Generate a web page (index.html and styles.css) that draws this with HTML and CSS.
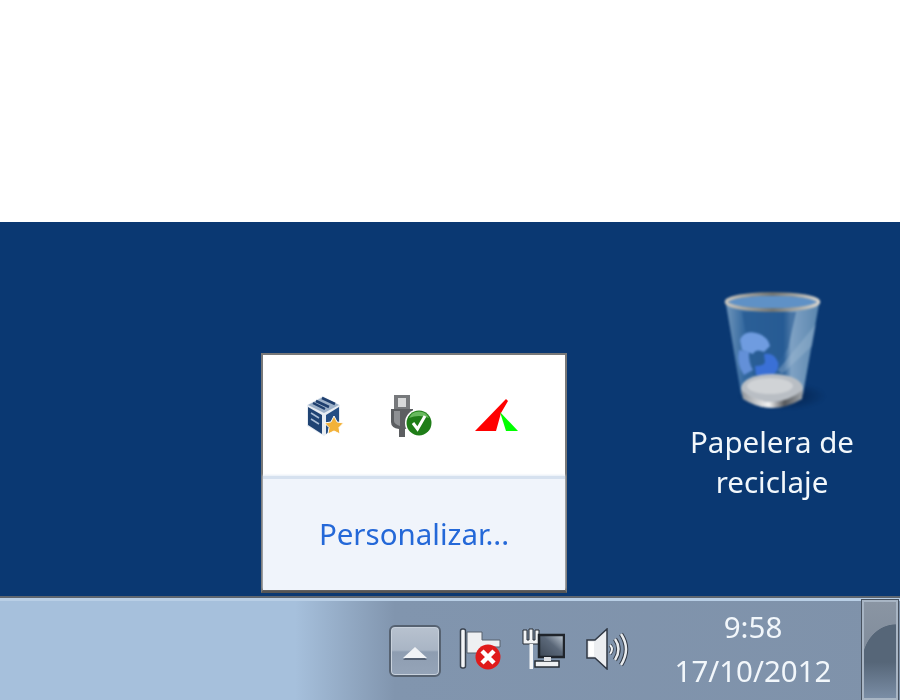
FILE: index.html
```html
<!DOCTYPE html>
<html lang="es">
<head>
  <meta charset="UTF-8">
  <title>Área de notificación</title>
  <link rel="stylesheet" href="styles.css">
</head>
<body>
  <div class="blank"></div>

  <div class="desktop">
    <div class="desk-icon">
      <svg class="bin" viewBox="0 0 110 125" width="110" height="125">
        <defs>
          <linearGradient id="binBody" x1="0" y1="0" x2="1" y2="0">
            <stop offset="0" stop-color="#6f95ba"/>
            <stop offset=".2" stop-color="#33689f"/>
            <stop offset=".62" stop-color="#2a5f98"/>
            <stop offset=".7" stop-color="#7fa2c4"/>
            <stop offset="1" stop-color="#5a86ae"/>
          </linearGradient>
          <linearGradient id="binRim" x1="0" y1="0" x2="1" y2="0">
            <stop offset="0" stop-color="#c9c6bf"/>
            <stop offset=".5" stop-color="#77766f"/>
            <stop offset="1" stop-color="#d8d6d0"/>
          </linearGradient>
          <linearGradient id="binBase" x1="0" y1="0" x2="1" y2="0">
            <stop offset="0" stop-color="#8f949a"/>
            <stop offset=".45" stop-color="#f4f4f4"/>
            <stop offset=".7" stop-color="#55585c"/>
            <stop offset="1" stop-color="#a2a6aa"/>
          </linearGradient>
          <radialGradient id="binShadow">
            <stop offset="0" stop-color="#02173a" stop-opacity=".75"/>
            <stop offset="1" stop-color="#02173a" stop-opacity="0"/>
          </radialGradient>
        </defs>
        <ellipse cx="62" cy="108" rx="44" ry="14" fill="url(#binShadow)"/>
        <path d="M6 16 L21 106 Q52 124 83 106 L99 16 Z" fill="url(#binBody)"/>
        <path d="M22 24 L76 24 L68 60 L44 95 L34 92 Z" fill="#245891" opacity=".6"/>
        <path d="M58 82 L96 36 L92 58 L62 86 Z" fill="#a6c0d8" opacity=".35"/>
        <!-- recycle arrows -->
        <path d="M20 52 Q24 42 36 45 Q48 48 50 58 L44 64 Q36 60 33 66 L22 62 Z" fill="#6f9ce0"/>
        <path d="M19 62 L29 64 Q28 74 33 82 L24 87 Q16 76 19 62 Z" fill="#6390d8"/>
        <path d="M44 66 Q54 64 58 74 Q60 84 50 88 L36 87 L35 78 Q44 78 45 74 Z" fill="#3a70d6"/>
        <ellipse cx="52" cy="100" rx="31" ry="14" fill="#b9bec4"/>
        <ellipse cx="50" cy="98" rx="23" ry="8" fill="#d0d3d6"/>
        <path d="M21 102 L23 111 Q52 129 82 111 L83 102 Q52 126 21 102 Z" fill="url(#binBase)"/>
        <ellipse cx="52.500" cy="14" rx="44" ry="6.500" fill="#5f91c6"/>
        <ellipse cx="52.500" cy="14" rx="46" ry="8" fill="none" stroke="url(#binRim)" stroke-width="3.500"/>
      </svg>
      <span class="desk-label">Papelera de<br>reciclaje</span>
    </div>

    <div class="tray-popup">
      <div class="popup-icons">
        <svg class="soft" viewBox="0 0 40 44" width="40" height="44">
          <path d="M19 2 L36 11 L36 32 L20 42 L3 32 L3 11 Z" fill="#e8edf3"/>
          <path d="M19 3 L35 11 L20 19 L4 11 Z" fill="#9db1c9"/>
          <path d="M12 7 L25 13 M18 4 L31 10 M9 9 L21 15" stroke="#1f3f6e" stroke-width="2.500"/>
          <path d="M4 13 L18 21 L18 40 L4 31 Z" fill="#1f4373"/>
          <path d="M22 21 L35 13 L35 31 L22 40 Z" fill="#254e84"/>
          <path d="M7 19 L15 24 M7 25 L15 30" stroke="#a9bdd6" stroke-width="1.500"/>
          <path d="M30 22 L33.100 28 L39.500 29 L35 33.500 L36 40 L30 37 L24 40 L25 33.500 L20.500 29 L26.900 28 Z" fill="#f3b23a" stroke="#fff" stroke-width="1"/>
        </svg>
        <svg class="soft usb" viewBox="0 0 44 44" width="44" height="44">
          <path d="M4 1 H20 V15 H4 Z" fill="#77797c"/>
          <rect x="8" y="4" width="8" height="9" fill="#d8d9da"/>
          <path d="M1 15 H23 V28 Q23 34 15 35 V43 H9 V35 Q1 34 1 28 Z" fill="#5c5e61"/>
          <path d="M4 17 H10 V32 Q4 30 4 27 Z" fill="#8e9093"/>
          <circle cx="29" cy="29" r="14" fill="#fff"/>
          <circle cx="29" cy="29" r="12.500" fill="#1f7d18"/>
          <path d="M19 24 A11 11 0 0 1 39 24 Q29 20 19 24 Z" fill="#67b95d"/>
          <path d="M23 29 L27.500 35 L35 22" fill="none" stroke="#fff" stroke-width="3"/>
        </svg>
        <svg class="soft-light" viewBox="0 0 44 34" width="44" height="34">
          <path d="M31 0 L33 2 L26 14 L21 32 L0 32 Z" fill="#ff0000"/>
          <path d="M25 13 L43 32 L31 32 Z" fill="#00ff00"/>
        </svg>
      </div>
      <div class="popup-footer">
        <span class="customize">Personalizar...</span>
      </div>
    </div>
  </div>

  <div class="taskbar">
    <div class="task-space"></div>

    <div class="show-hidden"><span class="arrow-up"></span></div>

    <!-- action center -->
    <svg class="tray-icon flag" viewBox="0 0 44 42" width="44" height="42">
      <rect x="1.500" y="1" width="5" height="39" rx="2" fill="#f2f4f6" stroke="#39424e" stroke-width="1.500"/>
      <path d="M8 4 H23 V12 H41 V19 H34 V25 H8 Z" fill="#eef0f2" stroke="#56606c" stroke-width="1"/>
      <circle cx="29" cy="29" r="12.500" fill="#e01b1b"/>
      <path d="M23 23 L35 35 M35 23 L23 35" stroke="#fff" stroke-width="4.500"/>
    </svg>

    <!-- network -->
    <svg class="tray-icon network" viewBox="0 0 44 42" width="44" height="42">
      <defs>
        <linearGradient id="screen" x1="0" y1="1" x2="1" y2="0">
          <stop offset="0" stop-color="#3c4755"/>
          <stop offset=".55" stop-color="#5b6879"/>
          <stop offset="1" stop-color="#c2ccd6"/>
        </linearGradient>
      </defs>
      <path d="M2 2 V16 H18 V2 H14 V12 H12 V1 H8 V12 H6 V2 Z" fill="#f2f4f6" stroke="#262c34" stroke-width="1"/>
      <rect x="8.500" y="16" width="3.500" height="25" fill="#f2f4f6"/>
      <rect x="18" y="7" width="25" height="22" fill="url(#screen)" stroke="#1f242b" stroke-width="2.500"/>
      <rect x="14" y="33" width="24" height="6" fill="#eef0f2" stroke="#262c34" stroke-width="1.500"/>
      <rect x="23" y="29" width="7" height="4" fill="#dfe2e6"/>
    </svg>

    <!-- volume -->
    <svg class="tray-icon volume" viewBox="0 0 44 42" width="44" height="42">
      <path d="M1 12 H9 L21 1 V41 L9 30 H1 Z" fill="#eceef1" stroke="#2f3743" stroke-width="1.500"/>
      <path d="M3 14 H8 V28 H3 Z" fill="#fff"/>
      <path d="M24 17 Q28 21 24 26" fill="none" stroke="#2f3743" stroke-width="3.500"/>
      <path d="M29 11 Q36 21 29 32" fill="none" stroke="#2f3743" stroke-width="4.500"/>
      <path d="M35 6 Q45 21 35 37" fill="none" stroke="#2f3743" stroke-width="4.500"/>
      <path d="M24 17 Q28 21 24 26" fill="none" stroke="#f2f4f6" stroke-width="2"/>
      <path d="M29 11 Q36 21 29 32" fill="none" stroke="#e9ecef" stroke-width="2.500"/>
      <path d="M35 6 Q45 21 35 37" fill="none" stroke="#e9ecef" stroke-width="2.500"/>
    </svg>

    <div class="clock">
      <span>9:58</span>
      <span>17/10/2012</span>
    </div>

    <div class="show-desktop"></div>
  </div>
</body>
</html>
```

FILE: styles.css
```css
html, body {
  margin: 0;
  padding: 0;
}
body {
  width: 900px;
  height: 700px;
  overflow: hidden;
  background: #fff;
  font-family: "Noto Sans", "Open Sans", sans-serif;
}
.blank {
  height: 222px;
  background: #fff;
}
.desktop {
  position: relative;
  height: 374px;
  background: #0a3872;
  display: flex;
  justify-content: flex-end;
  align-items: flex-start;
  box-sizing: border-box;
  padding: 66px 43px 0 0;
}

/* recycle bin */
.desk-icon {
  display: flex;
  flex-direction: column;
  align-items: center;
  width: 170px;
}
.bin {
  margin-left: 6px;
  filter: blur(.8px);
}
.desk-label {
  margin-top: 9px;
  color: #f2f7fb;
  font-size: 29.5px;
  line-height: 40px;
  text-align: center;
  white-space: nowrap;
  filter: blur(.5px);
}

/* hidden icons popup */
.tray-popup {
  position: absolute;
  left: 261px;
  top: 131px;
  width: 306px;
  height: 240px;
  box-sizing: border-box;
  border: 2px solid #787878;
  border-bottom: 3px solid #555;
  background: #fff;
  display: flex;
  flex-direction: column;
}
.popup-icons {
  height: 121px;
  display: flex;
  align-items: center;
  padding: 0 46px 0 41px;
  justify-content: space-between;
  box-sizing: border-box;
}
.soft {
  filter: blur(.7px);
}
.usb {
  margin-left: 4px;
}
.soft-light {
  filter: blur(.5px);
}
.popup-footer {
  flex: 1;
  background: #f0f4fb;
  border-top: 3px solid #d6e1ef;
  box-shadow: 0 -1px 2px #e6edf6;
  display: flex;
  align-items: center;
  justify-content: center;
}
.customize {
  color: #2468d8;
  font-size: 29.5px;
  margin: 0 0 3px 0;
  filter: blur(.5px);
}

/* taskbar */
.taskbar {
  height: 104px;
  box-sizing: border-box;
  border-top: 2px solid #5e6670;
  display: flex;
  align-items: center;
  background: linear-gradient(to right, #a6c0dc 0, #a6c0dc 295px, #8195ae 395px, #7f92aa 100%);
  box-shadow: inset 0 3px 0 #b9cfe6;
}
.task-space {
  flex: 1;
}
.show-hidden {
  width: 52px;
  height: 52px;
  box-sizing: border-box;
  margin: 4px 18px 0 0;
  border: 2px solid #566271;
  border-radius: 6px;
  background: linear-gradient(to bottom, #b8c2cf 0, #a9b5c5 48%, #8e9db1 52%, #95a4b8 100%);
  box-shadow: inset 0 0 0 1px #c8d1dc;
  display: flex;
  align-items: center;
  justify-content: center;
  filter: blur(.7px);
}
.arrow-up {
  width: 0;
  height: 0;
  border-left: 12px solid transparent;
  border-right: 12px solid transparent;
  border-bottom: 11px solid #f1f3f6;
  margin-top: 2px;
  filter: drop-shadow(0 2px 0 #556173);
}
.tray-icon {
  flex: none;
  filter: blur(.6px);
}
.flag {
  margin: 0 18px 0 0;
}
.network {
  margin: 0 21px 0 0;
}
.volume {
  margin: 0 15px 0 0;
}
.clock {
  width: 216px;
  display: flex;
  flex-direction: column;
  align-items: center;
  gap: 8px;
  color: #f2f7fb;
  font-size: 29.5px;
  line-height: 36px;
  filter: blur(.5px);
}
.show-desktop {
  width: 36px;
  height: 100px;
  margin: 2px 2px 0 1px;
  box-sizing: border-box;
  border: 2px solid #a8b5c4;
  outline: 1px solid #48525f;
  background:
    radial-gradient(ellipse 34px 38px at 100% 60px, #566678 98%, transparent 100%) top / 100% 60px no-repeat,
    linear-gradient(to bottom, #8a95a3 0, #7f8b9a 58px, #566678 60px, #7a8da5 100%);
  filter: blur(.6px);
}
```
